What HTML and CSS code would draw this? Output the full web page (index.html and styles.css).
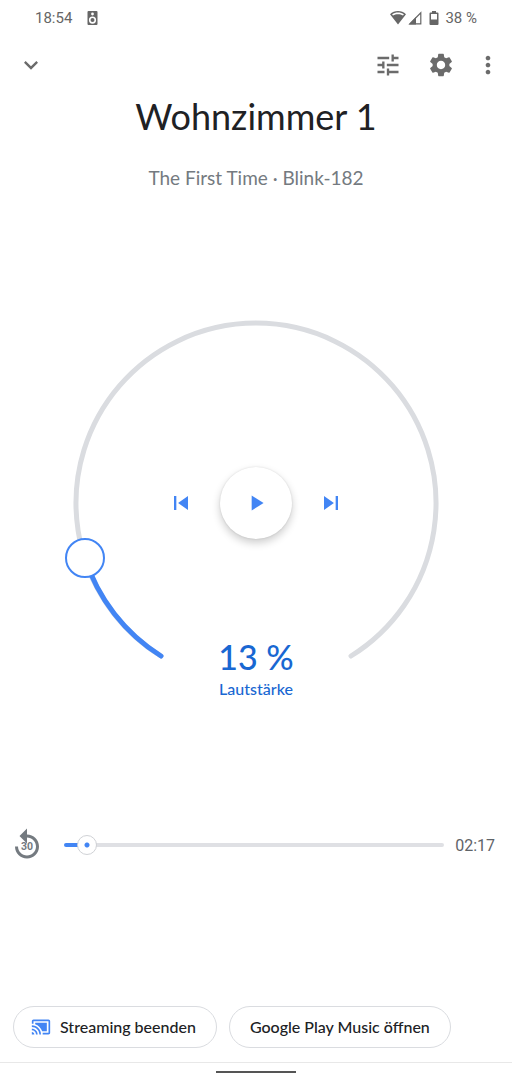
FILE: index.html
```html
<!DOCTYPE html>
<html lang="de">

<head>
    <meta charset="UTF-8">
    <meta name="viewport" content="width=device-width, initial-scale=1.0">
    <title>Wohnzimmer 1</title>
    <link rel="stylesheet" href="styles.css">
</head>

<body>
    <div class="status-bar">
        <span>18:54</span>
        <svg class="speaker" viewBox="0 0 10 14"><path fill-rule="evenodd" d="M1 0h8a1 1 0 0 1 1 1v12a1 1 0 0 1-1 1H1a1 1 0 0 1-1-1V1a1 1 0 0 1 1-1zM5 1.600a1.400 1.400 0 1 0 0 2.800 1.400 1.400 0 0 0 0-2.800zM5 5.500a3.600 3.600 0 1 0 0 7.200 3.600 3.600 0 0 0 0-7.200zM5 7.100a2 2 0 1 1 0 4 2 2 0 0 1 0-4z"/></svg>
        <div class="status-right">
            <svg class="wifi" viewBox="0 0 16 14"><path fill-rule="evenodd" d="M8 0C5 0 2.200 1 0 3.200L8 13.500 16 3.200C13.800 1 11 0 8 0zM8 1.500c2.200 0 4.200.6 5.900 1.900l-.9 1.200C11.500 3.700 9.800 3.300 8 3.300s-3.500.4-5 1.300l-.9-1.200C3.800 2.100 5.800 1.500 8 1.500z"/></svg>
            <svg class="signal" viewBox="0 0 14 14"><path d="M12.800 1.800V12.800H1.800z" fill="none" stroke="currentColor" stroke-width="1.200"/><path d="M8 6v7.400H1z"/></svg>
            <svg class="battery" viewBox="0 0 10 14"><path fill-rule="evenodd" d="M3 0h4v1.500h1.500a1 1 0 0 1 1 1V13a1 1 0 0 1-1 1h-7a1 1 0 0 1-1-1V2.500a1 1 0 0 1 1-1H3zM2 3v5.500h6V3z"/></svg>
            <span>38 %</span>
        </div>
    </div>

    <header class="app-bar">
        <button class="icon-button" aria-label="Schließen">
            <svg class="icon" viewBox="0 0 24 24"><path d="M7.410 8.590L12 13.170l4.590-4.580L18 10l-6 6-6-6z"/></svg>
        </button>
        <div class="actions">
            <button class="icon-button" aria-label="Equalizer">
                <svg class="icon" viewBox="0 0 24 24"><path d="M3 17v2h6v-2H3zM3 5v2h10V5H3zm10 16v-2h8v-2h-8v-2h-2v6h2zM7 9v2H3v2h4v2h2V9H7zm14 4v-2H11v2h10zm-6-4h2V7h4V5h-4V3h-2v6z"/></svg>
            </button>
            <button class="icon-button" aria-label="Einstellungen">
                <svg class="icon" viewBox="0 0 24 24"><path d="M19.140 12.940c.04-.3.060-.61.060-.94 0-.32-.02-.64-.07-.94l2.030-1.580c.18-.14.230-.41.120-.61l-1.920-3.320c-.12-.22-.37-.29-.59-.22l-2.390.96c-.5-.38-1.030-.7-1.620-.94l-.36-2.540c-.04-.24-.24-.41-.48-.41h-3.840c-.24 0-.43.170-.47.410l-.36 2.540c-.59.240-1.130.570-1.620.940l-2.390-.96c-.22-.08-.47 0-.59.220L2.740 8.870c-.12.210-.08.470.120.610l2.030 1.580c-.05.3-.09.630-.09.940s.020.640.070.940l-2.030 1.580c-.18.140-.23.410-.12.610l1.920 3.320c.12.220.37.290.59.220l2.390-.96c.5.380 1.030.7 1.620.940l.36 2.540c.05.240.24.410.48.410h3.840c.24 0 .44-.17.470-.41l.36-2.540c.59-.24 1.130-.56 1.620-.94l2.390.96c.22.080.47 0 .59-.22l1.920-3.320c.12-.22.070-.47-.12-.61l-2.010-1.580zM12 15.600c-1.980 0-3.600-1.620-3.600-3.600s1.620-3.600 3.600-3.600 3.600 1.620 3.600 3.600-1.620 3.600-3.600 3.600z"/></svg>
            </button>
            <button class="icon-button more" aria-label="Weitere Optionen">
                <svg class="icon" viewBox="0 0 24 24"><path d="M12 8c1.100 0 2-.9 2-2s-.9-2-2-2-2 .9-2 2 .9 2 2 2zm0 2c-1.100 0-2 .9-2 2s.9 2 2 2 2-.9 2-2-.9-2-2-2zm0 6c-1.100 0-2 .9-2 2s.9 2 2 2 2-.9 2-2-.9-2-2-2z"/></svg>
            </button>
        </div>
    </header>

    <main>
        <h1>Wohnzimmer 1</h1>
        <p class="track-name">The First Time · Blink-182</p>

        <div class="dial">
            <svg class="dial-ring" viewBox="0 0 400 400">
                <path class="ring" d="M105 353A180 180 0 1 1 295 353"/>
                <path class="ring-fill" d="M105 353A180 180 0 0 1 29 255"/>
                <circle class="knob" cx="29" cy="255" r="19"/>
            </svg>
            <input class="volume" id="volume" type="range" min="0" max="100" value="13">
            <div class="controls">
                <button class="skip" aria-label="Zurück">
                    <svg class="icon" viewBox="0 0 24 24"><path d="M6 6h2v12H6zm3.500 6l8.500 6V6z"/></svg>
                </button>
                <button class="play" aria-label="Wiedergabe">
                    <svg class="icon" viewBox="0 0 24 24"><path d="M8 5v14l11-7z"/></svg>
                </button>
                <button class="skip" aria-label="Weiter">
                    <svg class="icon" viewBox="0 0 24 24"><path d="M6 18l8.500-6L6 6v12zM16 6v12h2V6h-2z"/></svg>
                </button>
            </div>
            <div class="readout">
                <output class="percent" for="volume">13 %</output>
                <label for="volume">Lautstärke</label>
            </div>
        </div>

        <div class="seek">
            <button class="replay" aria-label="30 Sekunden zurück">
                <svg viewBox="0 0 24 24">
                    <path d="M12 5V1L7 6l5 5V7c3.310 0 6 2.690 6 6s-2.690 6-6 6-6-2.690-6-6H4c0 4.420 3.580 8 8 8s8-3.580 8-8-3.580-8-8-8z"/>
                    <text x="12" y="15.500" text-anchor="middle">30</text>
                </svg>
            </button>
            <input class="position" type="range" min="0" max="142" value="5" aria-label="Position" style="--played: 5%">
            <span class="remaining">02:17</span>
        </div>
    </main>

    <footer class="chips">
        <button class="chip">
            <svg viewBox="0 0 24 24"><path d="M1 18v3h3c0-1.660-1.340-3-3-3zm0-4v2c2.760 0 5 2.240 5 5h2c0-3.870-3.130-7-7-7zm18-7H5v1.630c3.960 1.280 7.090 4.410 8.370 8.370H19V7zM1 10v2c4.970 0 9 4.030 9 9h2c0-6.080-4.930-11-11-11zm20-7H3c-1.100 0-2 .9-2 2v3h2V5h18v14h-7v2h7c1.100 0 2-.9 2-2V5c0-1.100-.9-2-2-2z"/></svg>
            Streaming beenden
        </button>
        <button class="chip">Google Play Music öffnen</button>
    </footer>

    <div class="nav-bar"></div>
</body>

</html>
```
FILE: styles.css
```css
* {
    box-sizing: border-box;
}

body {
    margin: 0;
    min-height: 100vh;
    display: flex;
    flex-direction: column;
    background: #fff;
    color: #202124;
    font-family: "Google Sans", Lato, "Open Sans", sans-serif;
}

button {
    padding: 0;
    border: none;
    background: none;
    color: inherit;
    font: inherit;
    cursor: pointer;
}

svg {
    display: block;
    flex: none;
    fill: currentColor;
}

.icon {
    width: 28px;
    height: 28px;
}

.status-bar {
    display: flex;
    align-items: center;
    height: 35px;
    padding: 0 35px;
    color: #666;
    font-family: "Google Sans", Roboto, sans-serif;
    font-size: 15px;
}

.speaker {
    width: 11px;
    height: 14px;
    margin-left: 15px;
}

.status-right {
    display: flex;
    align-items: center;
    margin-left: auto;
}

.wifi {
    width: 16px;
    height: 14px;
    margin-right: 2px;
}

.signal {
    width: 14px;
    height: 14px;
    margin-right: 7px;
}

.battery {
    width: 10px;
    height: 14px;
    margin-right: 6px;
}

.app-bar {
    display: flex;
    align-items: center;
    justify-content: space-between;
    height: 59px;
    padding: 0 10px 0 17px;
    color: #6b6b6b;
}

.actions {
    display: flex;
    gap: 25px;
}

.more {
    margin-left: -6px;
}

main {
    flex: 1;
    display: flex;
    flex-direction: column;
}

h1 {
    margin: 0;
    font-size: 36px;
    line-height: 44px;
    font-weight: 400;
    text-align: center;
}

.track-name {
    margin: 26px 0 0;
    color: #747a80;
    font-size: 19px;
    line-height: 28px;
    text-align: center;
}

.dial {
    display: grid;
    width: 100%;
    max-width: 400px;
    margin: 111px auto 0;
}

.dial > * {
    grid-area: 1 / 1;
}

.dial-ring {
    width: 100%;
    fill: none;
    stroke-width: 5;
    stroke-linecap: round;
}

.ring {
    stroke: #dadce0;
}

.ring-fill {
    stroke: #4285f4;
}

.knob {
    fill: #fff;
    stroke: #4285f4;
    stroke-width: 2;
}

.volume {
    width: 100%;
    height: 100%;
    margin: 0;
    opacity: 0;
}

.controls {
    display: flex;
    align-items: center;
    justify-content: center;
    gap: 25px;
    place-self: center;
    color: #4285f4;
    z-index: 1;
}

.play {
    display: flex;
    align-items: center;
    justify-content: center;
    width: 72px;
    height: 72px;
    border-radius: 50%;
    background: #fff;
    box-shadow: 0 4px 8px rgba(0, 0, 0, 0.2), 0 0 2px rgba(0, 0, 0, 0.12);
}

.play .icon {
    width: 26px;
    height: 26px;
}

.readout {
    display: flex;
    flex-direction: column;
    align-self: end;
    justify-self: center;
    text-align: center;
    color: #1967d2;
    font-weight: 500;
    z-index: 1;
}

.percent {
    font-size: 34px;
    line-height: 40px;
}

.readout label {
    font-size: 16px;
    line-height: 24px;
    margin-bottom: 2px;
}

.seek {
    display: flex;
    align-items: center;
    margin-top: 124px;
    padding: 0 17px 0 9px;
}

.replay {
    color: #747a80;
}

.replay svg {
    width: 36px;
    height: 36px;
}

.replay text {
    font-family: Roboto, sans-serif;
    font-size: 7px;
    font-weight: 700;
}

.position {
    appearance: none;
    flex: 1;
    min-width: 0;
    height: 20px;
    margin: 0 11px 0 19px;
    background: none;
}

.position::-webkit-slider-runnable-track {
    height: 4px;
    border-radius: 2px;
    background: linear-gradient(to right, #4285f4 var(--played), #dfe0e4 var(--played));
}

.position::-webkit-slider-thumb {
    appearance: none;
    width: 20px;
    height: 20px;
    margin-top: -8px;
    border: 1px solid #d0d2d6;
    border-radius: 50%;
    background: radial-gradient(circle, #4285f4 2px, #fff 3px);
}

.remaining {
    color: #5f6368;
    font-family: Roboto, sans-serif;
    font-size: 16px;
}

.chips {
    display: flex;
    flex-wrap: wrap;
    gap: 12px;
    padding: 0 13px 14px;
}

.chip {
    display: flex;
    align-items: center;
    gap: 9px;
    height: 42px;
    padding: 0 20px 1px;
    border: 1px solid #dadce0;
    border-radius: 21px;
    font-size: 16px;
    font-weight: 500;
}

.chip:first-child {
    padding-left: 17px;
}

.chip svg {
    width: 20px;
    height: 20px;
    color: #4285f4;
}

.nav-bar {
    height: 18px;
    padding-top: 8px;
    border-top: 1px solid #e8e8e8;
}

.nav-bar::before {
    content: "";
    display: block;
    width: 80px;
    height: 2px;
    margin: 0 auto;
    background: #555;
}
```
